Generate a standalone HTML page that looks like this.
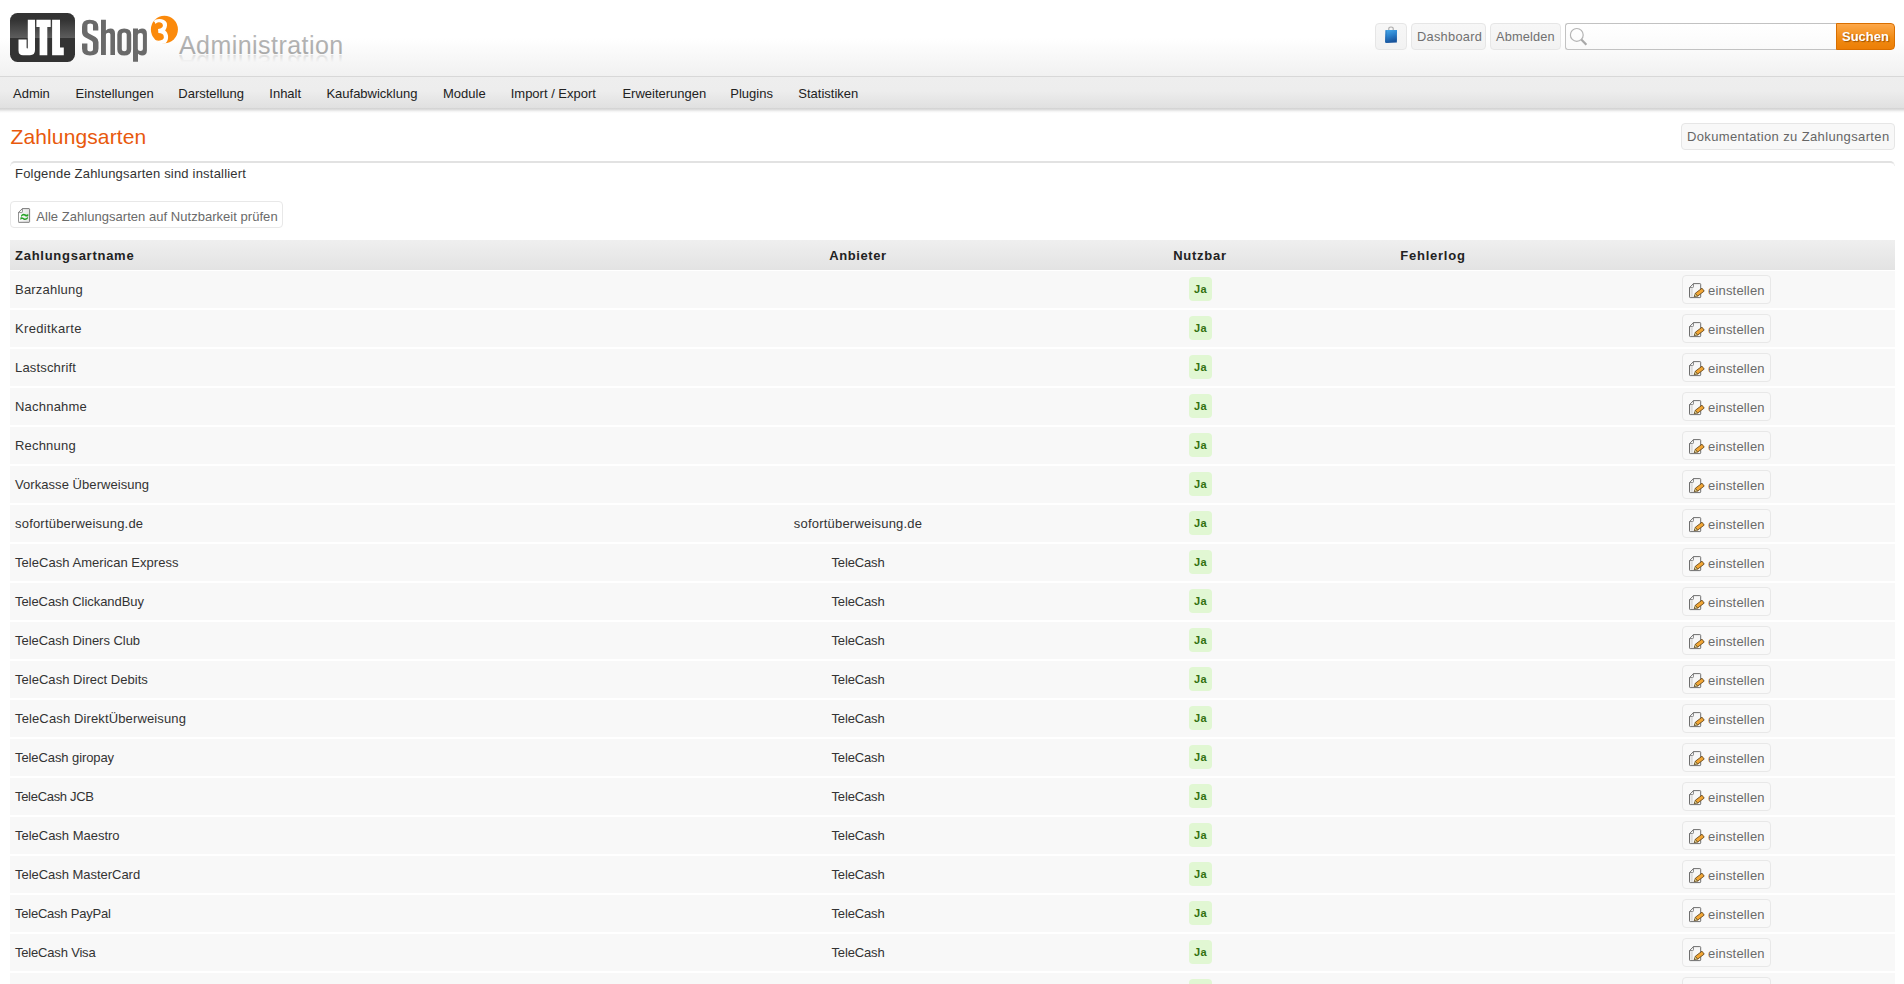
<!DOCTYPE html><html><head><meta charset="utf-8"><title>Zahlungsarten</title><style>
*{box-sizing:border-box}
html,body{margin:0;padding:0;background:#fff;width:1904px;height:984px;overflow:hidden;position:relative;font-family:"Liberation Sans",sans-serif;}
.a{position:absolute}
.t{white-space:nowrap;line-height:15px}
.dv,.dvp,.dve{font-size:13px;color:#333}
.dvb{font-size:13px;font-weight:bold;color:#222}
#hdr{left:0;top:0;width:1904px;height:76px;background:linear-gradient(#ffffff 0%,#ffffff 50%,#f9f9f9 70%,#f1f1f1 100%)}
#hline{left:0;top:76px;width:1904px;height:1px;background:#d8d8d8}
#nav{left:0;top:77px;width:1904px;height:31px;background:linear-gradient(#eeeeee 0%,#ededed 45%,#e0e0e0 100%)}
#navsh{left:0;top:108px;width:1904px;height:5px;background:linear-gradient(#d3d3d3 0%,#d6d6d6 20%,#e6e6e6 45%,#f5f5f5 70%,#ffffff 100%)}
.nv{font-size:13px;color:#222;top:86px}
.hb{top:23px;height:27px;border:1px solid #e6e6e6;border-radius:4px;background:linear-gradient(#f7f7f7,#f2f2f2);}
.hbt{font-size:12.8px !important;color:#707070;top:29px}
#srch{left:1565px;top:23px;width:272px;height:27px;border:1px solid #c2c2c2;border-right:none;border-radius:3px 0 0 3px;background:linear-gradient(#ffffff,#fafafa)}
#sbtn{left:1836px;top:23px;width:59px;height:27px;border:1px solid #d96f00;border-radius:0 4px 4px 0;background:linear-gradient(#fda84a,#f08a12 60%,#ec7e06)}
#sbt{left:1842px;top:29px;font-size:13px;font-weight:bold;color:#fff;text-shadow:1px 1px 1px #9a5000}
#title{left:10.5px;top:124px;font-size:21px;color:#e8590c;line-height:26px;letter-spacing:0.12px}
#doc{left:1681px;top:123px;width:214px;height:27px;border:1px solid #e6e6e6;border-radius:4px;background:#f8f8f8}
#boxline{left:10px;top:161px;width:1885px;height:5px;border-top:2px solid #e2e2e2;border-left:1px solid #f0f0f0;border-right:1px solid #f0f0f0;border-radius:6px 6px 0 0}
#alle{left:10px;top:201px;width:273px;height:27px;border:1px solid #e8e8e8;border-radius:4px;background:#fff}
#thead{left:10px;top:240px;width:1885px;height:30px;background:linear-gradient(#efefef,#e3e3e3)}
.row{left:10px;width:1885px;height:37px;background:#f8f8f8}
.ja{width:23px;height:24px;background:#e1f7d3;border-radius:4px;left:1189px}
.jat{font-size:11px;font-weight:bold;color:#327010;letter-spacing:0.3px}
.eb{left:1682px;width:89px;height:29px;border:1px solid #e8e8e8;border-radius:4px;background:#f9f9f9}
.ebt{left:1708px;color:#6a6a6a}
</style></head><body>
<div id="hdr" class="a"></div><div id="hline" class="a"></div><div id="nav" class="a"></div><div id="navsh" class="a"></div>

<svg class="a" style="left:0;top:0" width="360" height="76" viewBox="0 0 360 76">
<defs>
<linearGradient id="jg" x1="0" y1="0" x2="0" y2="1">
<stop offset="0" stop-color="#333"/><stop offset="0.15" stop-color="#343434"/><stop offset="0.5" stop-color="#5c5c5c"/><stop offset="0.505" stop-color="#333"/><stop offset="1" stop-color="#333"/>
</linearGradient>
<linearGradient id="adm" x1="0" y1="0" x2="0" y2="1"><stop offset="0" stop-color="#bdbdbd"/><stop offset="1" stop-color="#a4a4a4"/></linearGradient>
<linearGradient id="refl" gradientUnits="userSpaceOnUse" x1="0" y1="46" x2="0" y2="54"><stop offset="0" stop-color="#f4f4f4"/><stop offset="1" stop-color="#b8b8b8"/></linearGradient>
</defs>
<rect x="10" y="13" width="65" height="49" rx="7.5" fill="url(#jg)"/>
<path fill="#fff" d="M27.8,19.7 H35 V50 Q35,55.2 30,55.2 H23 Q18.5,55.2 18.5,50.5 V39.6 H26.6 V47.5 Q26.6,48.6 27.4,48.6 Q27.8,48.6 27.8,47.5 Z"/>
<path fill="#fff" d="M36.4,19.7 H50.7 V27 H47.3 V55.2 H39.6 V27 H36.4 Z"/>
<path fill="#fff" d="M52.1,19.7 H60 V47.6 H63.8 V55.2 H52.1 Z"/>
<g fill="#6a6a6a">
<path d="M89.5,19.7 Q98.3,19.7 98.3,27 V30.5 H93 V25.5 Q93,23.6 90.2,23.6 Q87.4,23.6 87.4,25.5 V31 Q87.4,32.6 89,33.5 L95.5,37 Q98.5,38.8 98.5,42 V48.5 Q98.5,55.5 90,55.5 Q82,55.5 82,48.5 V43.5 H87.4 V49.5 Q87.4,51.4 90.2,51.4 Q93,51.4 93,49.5 V43 Q93,41.6 91.5,40.8 L85,37.2 Q82,35.4 82,32 V27 Q82,19.7 89.5,19.7 Z"/>
<path d="M101,19.7 H105.9 V30.5 Q107.5,28.5 110.5,28.5 Q115,28.5 115,33.5 V55 H110.4 V34.5 Q110.4,32.8 108.6,32.8 Q105.9,32.8 105.9,35 V55 H101 Z"/>
<path d="M124.2,28.5 Q131.2,28.5 131.2,34.5 V49.5 Q131.2,55.5 124.2,55.5 Q117.3,55.5 117.3,49.5 V34.5 Q117.3,28.5 124.2,28.5 Z M124.2,32.5 Q121.8,32.5 121.8,34.5 V49.3 Q121.8,51.3 124.2,51.3 Q126.7,51.3 126.7,49.3 V34.5 Q126.7,32.5 124.2,32.5 Z"/>
<path d="M133,28.5 H138 V30.3 Q139.5,28.5 142,28.5 Q146.9,28.5 146.9,33.5 V50.5 Q146.9,55.5 142,55.5 Q139.5,55.5 138,53.8 V61.8 H133 Z M140.5,33 Q137.8,33 137.8,35 V49 Q137.8,51 140.5,51 Q142.9,51 142.9,49 V35 Q142.9,33 140.5,33 Z"/>
</g>
<ellipse cx="164.4" cy="29.5" rx="13.5" ry="13.65" fill="#fb8a0c"/>
<path fill="#fff" transform="translate(148,13) scale(0.03455)" d="M205,195 C330,150 500,170 545,290 C565,380 530,460 495,510 C560,560 600,660 575,760 C560,810 540,840 515,870 L480,880 L300,860 L230,790 C300,815 420,800 450,740 C465,700 458,690 455,680 C460,620 400,580 300,578 L290,460 C400,455 440,400 430,350 C420,290 370,265 310,270 C260,275 230,300 215,320 C200,280 190,240 160,250 C170,230 185,210 205,195 Z"/>
<clipPath id="rc"><rect x="170" y="54" width="190" height="8"/></clipPath>
<text x="179" y="53.5" font-family="Liberation Sans" font-size="25" fill="url(#adm)" letter-spacing="0.45">Administration</text>
<g clip-path="url(#rc)" opacity="0.45"><g transform="translate(0,108) scale(1,-1)">
<text x="179" y="53.5" font-family="Liberation Sans" font-size="25" fill="url(#refl)" letter-spacing="0.45">Administration</text>
</g></g>
</svg>
<div class="a t nv" style="left:13px">Admin</div>
<div class="a t nv" style="left:75.6px">Einstellungen</div>
<div class="a t nv" style="left:178.3px">Darstellung</div>
<div class="a t nv" style="left:269.3px">Inhalt</div>
<div class="a t nv" style="left:326.4px">Kaufabwicklung</div>
<div class="a t nv" style="left:443px">Module</div>
<div class="a t nv" style="left:510.7px">Import / Export</div>
<div class="a t nv" style="left:622.4px">Erweiterungen</div>
<div class="a t nv" style="left:730.3px">Plugins</div>
<div class="a t nv" style="left:798.3px">Statistiken</div>
<div class="a hb" style="left:1375px;width:32px"></div>
<svg class="a" style="left:1383px;top:26px" width="16" height="18" viewBox="0 0 16 18">
<defs><linearGradient id="bg" x1="0" y1="0" x2="0.3" y2="1"><stop offset="0" stop-color="#49aaea"/><stop offset="0.5" stop-color="#2c82cc"/><stop offset="1" stop-color="#18549c"/></linearGradient></defs>
<path d="M5.8,5 V2.6 Q5.8,1 8,1 Q10.2,1 10.2,2.6 V5" fill="none" stroke="#a9a9a9" stroke-width="1.1"/>
<path d="M2.6,4 H14 L13.9,16.4 L3.4,16.9 L2.1,16.3 Z" fill="url(#bg)"/>
<path d="M2.6,4 L3.4,4.6 L3.4,16.9 L2.1,16.3 Z" fill="#1d5fa6" opacity="0.7"/>
</svg>
<div class="a hb" style="left:1411px;width:75px"></div><div class="a t dv hbt" style="left:1417px;letter-spacing:0.289px">Dashboard</div>
<div class="a hb" style="left:1490px;width:71px"></div><div class="a t dv hbt" style="left:1496px;letter-spacing:0.150px">Abmelden</div>
<div id="srch" class="a"></div>
<svg class="a" style="left:1566px;top:24px" width="26" height="24" viewBox="0 0 26 24">
<circle cx="10.8" cy="10.9" r="6.4" fill="none" stroke="#b4b4b4" stroke-width="1.2"/>
<path d="M15.3,15.5 L20.4,20.7" stroke="#a8a8a8" stroke-width="2.2"/>
</svg>
<div id="sbtn" class="a"></div><div id="sbt" class="a t">Suchen</div>
<div id="title" class="a t">Zahlungsarten</div>
<div id="doc" class="a"></div><div class="a t dv" style="left:1687px;top:129px;color:#666;letter-spacing:0.367px">Dokumentation zu Zahlungsarten</div>
<div id="boxline" class="a"></div>
<div class="a t dv" style="left:15px;top:166px;letter-spacing:0.200px">Folgende Zahlungsarten sind installiert</div>
<div id="alle" class="a"></div>
<svg class="a" style="left:18px;top:208px" width="13" height="16" viewBox="0 0 13 16">
<defs><linearGradient id="rfg" x1="0" y1="0" x2="1" y2="0"><stop offset="0" stop-color="#fff"/><stop offset="1" stop-color="#e4e4e4"/></linearGradient></defs>
<path d="M4.4,0.6 H11 Q11.6,0.6 11.6,1.2 V13.7 Q11.6,14.3 11,14.3 H0.9 Q0.3,14.3 0.3,13.7 V4.6 Z" fill="url(#rfg)" stroke="#7a7a7a" stroke-width="1"/>
<path d="M0.4,4.6 L4.4,0.7 V3.9 Q4.4,4.6 3.7,4.6 Z" fill="#fff" stroke="#7a7a7a" stroke-width="0.8"/>
<g transform="translate(0,-0.8)"><path d="M2.9,8.6 C3.8,6.4 5.8,6 7.3,7 C8.4,7.7 9.2,7.6 10.2,6.6 L10.4,8.9 C9,9.7 7.9,9.5 6.9,8.7 C5.9,7.9 4.5,8.1 3.4,9.7 Z" fill="#27a327"/>
<path d="M2.4,10.2 C3.7,9.7 4.8,10 5.8,10.8 C7,11.8 8.4,11.5 9.8,9.9 L10.1,10.9 C8.8,13.1 6.8,13.3 5.3,12.3 C4.3,11.6 3.3,11.7 2.4,12.7 Z" fill="#27a327"/></g>
</svg>
<div class="a t" style="left:36.3px;top:209px;font-size:13px;color:#6a6a6a;letter-spacing:0.035px">Alle Zahlungsarten auf Nutzbarkeit prüfen</div>
<div id="thead" class="a"></div>
<div class="a t dvb" style="left:15px;top:248px;letter-spacing:0.735px">Zahlungsartname</div>
<div class="a t dvb" style="left:758px;width:200px;text-align:center;top:248px;letter-spacing:0.607px">Anbieter</div>
<div class="a t dvb" style="left:1100px;width:200px;text-align:center;top:248px;letter-spacing:0.750px">Nutzbar</div>
<div class="a t dvb" style="left:1333px;width:200px;text-align:center;top:248px;letter-spacing:0.750px">Fehlerlog</div>
<div class="a row" style="top:271px"></div>
<div class="a t dv" style="left:15px;top:282px;letter-spacing:0.205px">Barzahlung</div>
<div class="a ja" style="top:277px"></div><div class="a t jat" style="left:1189px;width:23px;text-align:center;top:282px">Ja</div>
<div class="a eb" style="top:275px"></div>
<svg class="a" style="left:1688px;top:283px" width="18" height="17" viewBox="0 0 18 17">
<path d="M5.4,0.6 H11.9 Q12.7,0.6 12.7,1.4 V13.9 Q12.7,14.6 11.9,14.6 H2.2 Q1.5,14.6 1.5,13.9 V4.6 Z" fill="#f7f7f7" stroke="#6e6e6e" stroke-width="1"/>
<path d="M1.6,4.6 L5.4,0.7 V3.8 Q5.4,4.6 4.6,4.6 Z" fill="#fff" stroke="#707070" stroke-width="0.9"/>
<rect x="2.6" y="5.4" width="2.2" height="8.4" fill="#dcdcdc"/>
<path d="M7.3,10.3 L14.0,5.2 L16.2,8.1 L9.5,13.2 Z" fill="#f2a634" stroke="#6b4a1a" stroke-width="0.9" stroke-linejoin="round"/>
<path d="M7.3,10.3 L9.5,13.2 L6.1,13.6 Z" fill="#e9e29a" stroke="#6b4a1a" stroke-width="0.7" stroke-linejoin="round"/>
<path d="M6.1,13.6 L6.8,12.2 L7.5,13.2 Z" fill="#4a3210"/>
</svg>
<div class="a t dve ebt" style="top:283px;letter-spacing:0.184px">einstellen</div>
<div class="a row" style="top:310px"></div>
<div class="a t dv" style="left:15px;top:321px;letter-spacing:0.350px">Kreditkarte</div>
<div class="a ja" style="top:316px"></div><div class="a t jat" style="left:1189px;width:23px;text-align:center;top:321px">Ja</div>
<div class="a eb" style="top:314px"></div>
<svg class="a" style="left:1688px;top:322px" width="18" height="17" viewBox="0 0 18 17">
<path d="M5.4,0.6 H11.9 Q12.7,0.6 12.7,1.4 V13.9 Q12.7,14.6 11.9,14.6 H2.2 Q1.5,14.6 1.5,13.9 V4.6 Z" fill="#f7f7f7" stroke="#6e6e6e" stroke-width="1"/>
<path d="M1.6,4.6 L5.4,0.7 V3.8 Q5.4,4.6 4.6,4.6 Z" fill="#fff" stroke="#707070" stroke-width="0.9"/>
<rect x="2.6" y="5.4" width="2.2" height="8.4" fill="#dcdcdc"/>
<path d="M7.3,10.3 L14.0,5.2 L16.2,8.1 L9.5,13.2 Z" fill="#f2a634" stroke="#6b4a1a" stroke-width="0.9" stroke-linejoin="round"/>
<path d="M7.3,10.3 L9.5,13.2 L6.1,13.6 Z" fill="#e9e29a" stroke="#6b4a1a" stroke-width="0.7" stroke-linejoin="round"/>
<path d="M6.1,13.6 L6.8,12.2 L7.5,13.2 Z" fill="#4a3210"/>
</svg>
<div class="a t dve ebt" style="top:322px;letter-spacing:0.184px">einstellen</div>
<div class="a row" style="top:349px"></div>
<div class="a t dv" style="left:15px;top:360px;letter-spacing:0.170px">Lastschrift</div>
<div class="a ja" style="top:355px"></div><div class="a t jat" style="left:1189px;width:23px;text-align:center;top:360px">Ja</div>
<div class="a eb" style="top:353px"></div>
<svg class="a" style="left:1688px;top:361px" width="18" height="17" viewBox="0 0 18 17">
<path d="M5.4,0.6 H11.9 Q12.7,0.6 12.7,1.4 V13.9 Q12.7,14.6 11.9,14.6 H2.2 Q1.5,14.6 1.5,13.9 V4.6 Z" fill="#f7f7f7" stroke="#6e6e6e" stroke-width="1"/>
<path d="M1.6,4.6 L5.4,0.7 V3.8 Q5.4,4.6 4.6,4.6 Z" fill="#fff" stroke="#707070" stroke-width="0.9"/>
<rect x="2.6" y="5.4" width="2.2" height="8.4" fill="#dcdcdc"/>
<path d="M7.3,10.3 L14.0,5.2 L16.2,8.1 L9.5,13.2 Z" fill="#f2a634" stroke="#6b4a1a" stroke-width="0.9" stroke-linejoin="round"/>
<path d="M7.3,10.3 L9.5,13.2 L6.1,13.6 Z" fill="#e9e29a" stroke="#6b4a1a" stroke-width="0.7" stroke-linejoin="round"/>
<path d="M6.1,13.6 L6.8,12.2 L7.5,13.2 Z" fill="#4a3210"/>
</svg>
<div class="a t dve ebt" style="top:361px;letter-spacing:0.184px">einstellen</div>
<div class="a row" style="top:388px"></div>
<div class="a t dv" style="left:15px;top:399px;letter-spacing:0.214px">Nachnahme</div>
<div class="a ja" style="top:394px"></div><div class="a t jat" style="left:1189px;width:23px;text-align:center;top:399px">Ja</div>
<div class="a eb" style="top:392px"></div>
<svg class="a" style="left:1688px;top:400px" width="18" height="17" viewBox="0 0 18 17">
<path d="M5.4,0.6 H11.9 Q12.7,0.6 12.7,1.4 V13.9 Q12.7,14.6 11.9,14.6 H2.2 Q1.5,14.6 1.5,13.9 V4.6 Z" fill="#f7f7f7" stroke="#6e6e6e" stroke-width="1"/>
<path d="M1.6,4.6 L5.4,0.7 V3.8 Q5.4,4.6 4.6,4.6 Z" fill="#fff" stroke="#707070" stroke-width="0.9"/>
<rect x="2.6" y="5.4" width="2.2" height="8.4" fill="#dcdcdc"/>
<path d="M7.3,10.3 L14.0,5.2 L16.2,8.1 L9.5,13.2 Z" fill="#f2a634" stroke="#6b4a1a" stroke-width="0.9" stroke-linejoin="round"/>
<path d="M7.3,10.3 L9.5,13.2 L6.1,13.6 Z" fill="#e9e29a" stroke="#6b4a1a" stroke-width="0.7" stroke-linejoin="round"/>
<path d="M6.1,13.6 L6.8,12.2 L7.5,13.2 Z" fill="#4a3210"/>
</svg>
<div class="a t dve ebt" style="top:400px;letter-spacing:0.184px">einstellen</div>
<div class="a row" style="top:427px"></div>
<div class="a t dv" style="left:15px;top:438px;letter-spacing:0.193px">Rechnung</div>
<div class="a ja" style="top:433px"></div><div class="a t jat" style="left:1189px;width:23px;text-align:center;top:438px">Ja</div>
<div class="a eb" style="top:431px"></div>
<svg class="a" style="left:1688px;top:439px" width="18" height="17" viewBox="0 0 18 17">
<path d="M5.4,0.6 H11.9 Q12.7,0.6 12.7,1.4 V13.9 Q12.7,14.6 11.9,14.6 H2.2 Q1.5,14.6 1.5,13.9 V4.6 Z" fill="#f7f7f7" stroke="#6e6e6e" stroke-width="1"/>
<path d="M1.6,4.6 L5.4,0.7 V3.8 Q5.4,4.6 4.6,4.6 Z" fill="#fff" stroke="#707070" stroke-width="0.9"/>
<rect x="2.6" y="5.4" width="2.2" height="8.4" fill="#dcdcdc"/>
<path d="M7.3,10.3 L14.0,5.2 L16.2,8.1 L9.5,13.2 Z" fill="#f2a634" stroke="#6b4a1a" stroke-width="0.9" stroke-linejoin="round"/>
<path d="M7.3,10.3 L9.5,13.2 L6.1,13.6 Z" fill="#e9e29a" stroke="#6b4a1a" stroke-width="0.7" stroke-linejoin="round"/>
<path d="M6.1,13.6 L6.8,12.2 L7.5,13.2 Z" fill="#4a3210"/>
</svg>
<div class="a t dve ebt" style="top:439px;letter-spacing:0.184px">einstellen</div>
<div class="a row" style="top:466px"></div>
<div class="a t dv" style="left:15px;top:477px;letter-spacing:0.060px">Vorkasse Überweisung</div>
<div class="a ja" style="top:472px"></div><div class="a t jat" style="left:1189px;width:23px;text-align:center;top:477px">Ja</div>
<div class="a eb" style="top:470px"></div>
<svg class="a" style="left:1688px;top:478px" width="18" height="17" viewBox="0 0 18 17">
<path d="M5.4,0.6 H11.9 Q12.7,0.6 12.7,1.4 V13.9 Q12.7,14.6 11.9,14.6 H2.2 Q1.5,14.6 1.5,13.9 V4.6 Z" fill="#f7f7f7" stroke="#6e6e6e" stroke-width="1"/>
<path d="M1.6,4.6 L5.4,0.7 V3.8 Q5.4,4.6 4.6,4.6 Z" fill="#fff" stroke="#707070" stroke-width="0.9"/>
<rect x="2.6" y="5.4" width="2.2" height="8.4" fill="#dcdcdc"/>
<path d="M7.3,10.3 L14.0,5.2 L16.2,8.1 L9.5,13.2 Z" fill="#f2a634" stroke="#6b4a1a" stroke-width="0.9" stroke-linejoin="round"/>
<path d="M7.3,10.3 L9.5,13.2 L6.1,13.6 Z" fill="#e9e29a" stroke="#6b4a1a" stroke-width="0.7" stroke-linejoin="round"/>
<path d="M6.1,13.6 L6.8,12.2 L7.5,13.2 Z" fill="#4a3210"/>
</svg>
<div class="a t dve ebt" style="top:478px;letter-spacing:0.184px">einstellen</div>
<div class="a row" style="top:505px"></div>
<div class="a t dv" style="left:15px;top:516px;letter-spacing:0.198px">sofortüberweisung.de</div>
<div class="a t dvp" style="left:708px;width:300px;text-align:center;top:516px;letter-spacing:0.202px">sofortüberweisung.de</div>
<div class="a ja" style="top:511px"></div><div class="a t jat" style="left:1189px;width:23px;text-align:center;top:516px">Ja</div>
<div class="a eb" style="top:509px"></div>
<svg class="a" style="left:1688px;top:517px" width="18" height="17" viewBox="0 0 18 17">
<path d="M5.4,0.6 H11.9 Q12.7,0.6 12.7,1.4 V13.9 Q12.7,14.6 11.9,14.6 H2.2 Q1.5,14.6 1.5,13.9 V4.6 Z" fill="#f7f7f7" stroke="#6e6e6e" stroke-width="1"/>
<path d="M1.6,4.6 L5.4,0.7 V3.8 Q5.4,4.6 4.6,4.6 Z" fill="#fff" stroke="#707070" stroke-width="0.9"/>
<rect x="2.6" y="5.4" width="2.2" height="8.4" fill="#dcdcdc"/>
<path d="M7.3,10.3 L14.0,5.2 L16.2,8.1 L9.5,13.2 Z" fill="#f2a634" stroke="#6b4a1a" stroke-width="0.9" stroke-linejoin="round"/>
<path d="M7.3,10.3 L9.5,13.2 L6.1,13.6 Z" fill="#e9e29a" stroke="#6b4a1a" stroke-width="0.7" stroke-linejoin="round"/>
<path d="M6.1,13.6 L6.8,12.2 L7.5,13.2 Z" fill="#4a3210"/>
</svg>
<div class="a t dve ebt" style="top:517px;letter-spacing:0.184px">einstellen</div>
<div class="a row" style="top:544px"></div>
<div class="a t dv" style="left:15px;top:555px;letter-spacing:0.041px">TeleCash American Express</div>
<div class="a t dvp" style="left:708px;width:300px;text-align:center;top:555px;letter-spacing:-0.137px">TeleCash</div>
<div class="a ja" style="top:550px"></div><div class="a t jat" style="left:1189px;width:23px;text-align:center;top:555px">Ja</div>
<div class="a eb" style="top:548px"></div>
<svg class="a" style="left:1688px;top:556px" width="18" height="17" viewBox="0 0 18 17">
<path d="M5.4,0.6 H11.9 Q12.7,0.6 12.7,1.4 V13.9 Q12.7,14.6 11.9,14.6 H2.2 Q1.5,14.6 1.5,13.9 V4.6 Z" fill="#f7f7f7" stroke="#6e6e6e" stroke-width="1"/>
<path d="M1.6,4.6 L5.4,0.7 V3.8 Q5.4,4.6 4.6,4.6 Z" fill="#fff" stroke="#707070" stroke-width="0.9"/>
<rect x="2.6" y="5.4" width="2.2" height="8.4" fill="#dcdcdc"/>
<path d="M7.3,10.3 L14.0,5.2 L16.2,8.1 L9.5,13.2 Z" fill="#f2a634" stroke="#6b4a1a" stroke-width="0.9" stroke-linejoin="round"/>
<path d="M7.3,10.3 L9.5,13.2 L6.1,13.6 Z" fill="#e9e29a" stroke="#6b4a1a" stroke-width="0.7" stroke-linejoin="round"/>
<path d="M6.1,13.6 L6.8,12.2 L7.5,13.2 Z" fill="#4a3210"/>
</svg>
<div class="a t dve ebt" style="top:556px;letter-spacing:0.184px">einstellen</div>
<div class="a row" style="top:583px"></div>
<div class="a t dv" style="left:15px;top:594px;letter-spacing:-0.060px">TeleCash ClickandBuy</div>
<div class="a t dvp" style="left:708px;width:300px;text-align:center;top:594px;letter-spacing:-0.137px">TeleCash</div>
<div class="a ja" style="top:589px"></div><div class="a t jat" style="left:1189px;width:23px;text-align:center;top:594px">Ja</div>
<div class="a eb" style="top:587px"></div>
<svg class="a" style="left:1688px;top:595px" width="18" height="17" viewBox="0 0 18 17">
<path d="M5.4,0.6 H11.9 Q12.7,0.6 12.7,1.4 V13.9 Q12.7,14.6 11.9,14.6 H2.2 Q1.5,14.6 1.5,13.9 V4.6 Z" fill="#f7f7f7" stroke="#6e6e6e" stroke-width="1"/>
<path d="M1.6,4.6 L5.4,0.7 V3.8 Q5.4,4.6 4.6,4.6 Z" fill="#fff" stroke="#707070" stroke-width="0.9"/>
<rect x="2.6" y="5.4" width="2.2" height="8.4" fill="#dcdcdc"/>
<path d="M7.3,10.3 L14.0,5.2 L16.2,8.1 L9.5,13.2 Z" fill="#f2a634" stroke="#6b4a1a" stroke-width="0.9" stroke-linejoin="round"/>
<path d="M7.3,10.3 L9.5,13.2 L6.1,13.6 Z" fill="#e9e29a" stroke="#6b4a1a" stroke-width="0.7" stroke-linejoin="round"/>
<path d="M6.1,13.6 L6.8,12.2 L7.5,13.2 Z" fill="#4a3210"/>
</svg>
<div class="a t dve ebt" style="top:595px;letter-spacing:0.184px">einstellen</div>
<div class="a row" style="top:622px"></div>
<div class="a t dv" style="left:15px;top:633px;letter-spacing:-0.034px">TeleCash Diners Club</div>
<div class="a t dvp" style="left:708px;width:300px;text-align:center;top:633px;letter-spacing:-0.137px">TeleCash</div>
<div class="a ja" style="top:628px"></div><div class="a t jat" style="left:1189px;width:23px;text-align:center;top:633px">Ja</div>
<div class="a eb" style="top:626px"></div>
<svg class="a" style="left:1688px;top:634px" width="18" height="17" viewBox="0 0 18 17">
<path d="M5.4,0.6 H11.9 Q12.7,0.6 12.7,1.4 V13.9 Q12.7,14.6 11.9,14.6 H2.2 Q1.5,14.6 1.5,13.9 V4.6 Z" fill="#f7f7f7" stroke="#6e6e6e" stroke-width="1"/>
<path d="M1.6,4.6 L5.4,0.7 V3.8 Q5.4,4.6 4.6,4.6 Z" fill="#fff" stroke="#707070" stroke-width="0.9"/>
<rect x="2.6" y="5.4" width="2.2" height="8.4" fill="#dcdcdc"/>
<path d="M7.3,10.3 L14.0,5.2 L16.2,8.1 L9.5,13.2 Z" fill="#f2a634" stroke="#6b4a1a" stroke-width="0.9" stroke-linejoin="round"/>
<path d="M7.3,10.3 L9.5,13.2 L6.1,13.6 Z" fill="#e9e29a" stroke="#6b4a1a" stroke-width="0.7" stroke-linejoin="round"/>
<path d="M6.1,13.6 L6.8,12.2 L7.5,13.2 Z" fill="#4a3210"/>
</svg>
<div class="a t dve ebt" style="top:634px;letter-spacing:0.184px">einstellen</div>
<div class="a row" style="top:661px"></div>
<div class="a t dv" style="left:15px;top:672px;letter-spacing:0.027px">TeleCash Direct Debits</div>
<div class="a t dvp" style="left:708px;width:300px;text-align:center;top:672px;letter-spacing:-0.137px">TeleCash</div>
<div class="a ja" style="top:667px"></div><div class="a t jat" style="left:1189px;width:23px;text-align:center;top:672px">Ja</div>
<div class="a eb" style="top:665px"></div>
<svg class="a" style="left:1688px;top:673px" width="18" height="17" viewBox="0 0 18 17">
<path d="M5.4,0.6 H11.9 Q12.7,0.6 12.7,1.4 V13.9 Q12.7,14.6 11.9,14.6 H2.2 Q1.5,14.6 1.5,13.9 V4.6 Z" fill="#f7f7f7" stroke="#6e6e6e" stroke-width="1"/>
<path d="M1.6,4.6 L5.4,0.7 V3.8 Q5.4,4.6 4.6,4.6 Z" fill="#fff" stroke="#707070" stroke-width="0.9"/>
<rect x="2.6" y="5.4" width="2.2" height="8.4" fill="#dcdcdc"/>
<path d="M7.3,10.3 L14.0,5.2 L16.2,8.1 L9.5,13.2 Z" fill="#f2a634" stroke="#6b4a1a" stroke-width="0.9" stroke-linejoin="round"/>
<path d="M7.3,10.3 L9.5,13.2 L6.1,13.6 Z" fill="#e9e29a" stroke="#6b4a1a" stroke-width="0.7" stroke-linejoin="round"/>
<path d="M6.1,13.6 L6.8,12.2 L7.5,13.2 Z" fill="#4a3210"/>
</svg>
<div class="a t dve ebt" style="top:673px;letter-spacing:0.184px">einstellen</div>
<div class="a row" style="top:700px"></div>
<div class="a t dv" style="left:15px;top:711px;letter-spacing:0.130px">TeleCash DirektÜberweisung</div>
<div class="a t dvp" style="left:708px;width:300px;text-align:center;top:711px;letter-spacing:-0.137px">TeleCash</div>
<div class="a ja" style="top:706px"></div><div class="a t jat" style="left:1189px;width:23px;text-align:center;top:711px">Ja</div>
<div class="a eb" style="top:704px"></div>
<svg class="a" style="left:1688px;top:712px" width="18" height="17" viewBox="0 0 18 17">
<path d="M5.4,0.6 H11.9 Q12.7,0.6 12.7,1.4 V13.9 Q12.7,14.6 11.9,14.6 H2.2 Q1.5,14.6 1.5,13.9 V4.6 Z" fill="#f7f7f7" stroke="#6e6e6e" stroke-width="1"/>
<path d="M1.6,4.6 L5.4,0.7 V3.8 Q5.4,4.6 4.6,4.6 Z" fill="#fff" stroke="#707070" stroke-width="0.9"/>
<rect x="2.6" y="5.4" width="2.2" height="8.4" fill="#dcdcdc"/>
<path d="M7.3,10.3 L14.0,5.2 L16.2,8.1 L9.5,13.2 Z" fill="#f2a634" stroke="#6b4a1a" stroke-width="0.9" stroke-linejoin="round"/>
<path d="M7.3,10.3 L9.5,13.2 L6.1,13.6 Z" fill="#e9e29a" stroke="#6b4a1a" stroke-width="0.7" stroke-linejoin="round"/>
<path d="M6.1,13.6 L6.8,12.2 L7.5,13.2 Z" fill="#4a3210"/>
</svg>
<div class="a t dve ebt" style="top:712px;letter-spacing:0.184px">einstellen</div>
<div class="a row" style="top:739px"></div>
<div class="a t dv" style="left:15px;top:750px;letter-spacing:-0.090px">TeleCash giropay</div>
<div class="a t dvp" style="left:708px;width:300px;text-align:center;top:750px;letter-spacing:-0.137px">TeleCash</div>
<div class="a ja" style="top:745px"></div><div class="a t jat" style="left:1189px;width:23px;text-align:center;top:750px">Ja</div>
<div class="a eb" style="top:743px"></div>
<svg class="a" style="left:1688px;top:751px" width="18" height="17" viewBox="0 0 18 17">
<path d="M5.4,0.6 H11.9 Q12.7,0.6 12.7,1.4 V13.9 Q12.7,14.6 11.9,14.6 H2.2 Q1.5,14.6 1.5,13.9 V4.6 Z" fill="#f7f7f7" stroke="#6e6e6e" stroke-width="1"/>
<path d="M1.6,4.6 L5.4,0.7 V3.8 Q5.4,4.6 4.6,4.6 Z" fill="#fff" stroke="#707070" stroke-width="0.9"/>
<rect x="2.6" y="5.4" width="2.2" height="8.4" fill="#dcdcdc"/>
<path d="M7.3,10.3 L14.0,5.2 L16.2,8.1 L9.5,13.2 Z" fill="#f2a634" stroke="#6b4a1a" stroke-width="0.9" stroke-linejoin="round"/>
<path d="M7.3,10.3 L9.5,13.2 L6.1,13.6 Z" fill="#e9e29a" stroke="#6b4a1a" stroke-width="0.7" stroke-linejoin="round"/>
<path d="M6.1,13.6 L6.8,12.2 L7.5,13.2 Z" fill="#4a3210"/>
</svg>
<div class="a t dve ebt" style="top:751px;letter-spacing:0.184px">einstellen</div>
<div class="a row" style="top:778px"></div>
<div class="a t dv" style="left:15px;top:789px;letter-spacing:-0.305px">TeleCash JCB</div>
<div class="a t dvp" style="left:708px;width:300px;text-align:center;top:789px;letter-spacing:-0.137px">TeleCash</div>
<div class="a ja" style="top:784px"></div><div class="a t jat" style="left:1189px;width:23px;text-align:center;top:789px">Ja</div>
<div class="a eb" style="top:782px"></div>
<svg class="a" style="left:1688px;top:790px" width="18" height="17" viewBox="0 0 18 17">
<path d="M5.4,0.6 H11.9 Q12.7,0.6 12.7,1.4 V13.9 Q12.7,14.6 11.9,14.6 H2.2 Q1.5,14.6 1.5,13.9 V4.6 Z" fill="#f7f7f7" stroke="#6e6e6e" stroke-width="1"/>
<path d="M1.6,4.6 L5.4,0.7 V3.8 Q5.4,4.6 4.6,4.6 Z" fill="#fff" stroke="#707070" stroke-width="0.9"/>
<rect x="2.6" y="5.4" width="2.2" height="8.4" fill="#dcdcdc"/>
<path d="M7.3,10.3 L14.0,5.2 L16.2,8.1 L9.5,13.2 Z" fill="#f2a634" stroke="#6b4a1a" stroke-width="0.9" stroke-linejoin="round"/>
<path d="M7.3,10.3 L9.5,13.2 L6.1,13.6 Z" fill="#e9e29a" stroke="#6b4a1a" stroke-width="0.7" stroke-linejoin="round"/>
<path d="M6.1,13.6 L6.8,12.2 L7.5,13.2 Z" fill="#4a3210"/>
</svg>
<div class="a t dve ebt" style="top:790px;letter-spacing:0.184px">einstellen</div>
<div class="a row" style="top:817px"></div>
<div class="a t dv" style="left:15px;top:828px;letter-spacing:-0.017px">TeleCash Maestro</div>
<div class="a t dvp" style="left:708px;width:300px;text-align:center;top:828px;letter-spacing:-0.137px">TeleCash</div>
<div class="a ja" style="top:823px"></div><div class="a t jat" style="left:1189px;width:23px;text-align:center;top:828px">Ja</div>
<div class="a eb" style="top:821px"></div>
<svg class="a" style="left:1688px;top:829px" width="18" height="17" viewBox="0 0 18 17">
<path d="M5.4,0.6 H11.9 Q12.7,0.6 12.7,1.4 V13.9 Q12.7,14.6 11.9,14.6 H2.2 Q1.5,14.6 1.5,13.9 V4.6 Z" fill="#f7f7f7" stroke="#6e6e6e" stroke-width="1"/>
<path d="M1.6,4.6 L5.4,0.7 V3.8 Q5.4,4.6 4.6,4.6 Z" fill="#fff" stroke="#707070" stroke-width="0.9"/>
<rect x="2.6" y="5.4" width="2.2" height="8.4" fill="#dcdcdc"/>
<path d="M7.3,10.3 L14.0,5.2 L16.2,8.1 L9.5,13.2 Z" fill="#f2a634" stroke="#6b4a1a" stroke-width="0.9" stroke-linejoin="round"/>
<path d="M7.3,10.3 L9.5,13.2 L6.1,13.6 Z" fill="#e9e29a" stroke="#6b4a1a" stroke-width="0.7" stroke-linejoin="round"/>
<path d="M6.1,13.6 L6.8,12.2 L7.5,13.2 Z" fill="#4a3210"/>
</svg>
<div class="a t dve ebt" style="top:829px;letter-spacing:0.184px">einstellen</div>
<div class="a row" style="top:856px"></div>
<div class="a t dv" style="left:15px;top:867px;letter-spacing:-0.033px">TeleCash MasterCard</div>
<div class="a t dvp" style="left:708px;width:300px;text-align:center;top:867px;letter-spacing:-0.137px">TeleCash</div>
<div class="a ja" style="top:862px"></div><div class="a t jat" style="left:1189px;width:23px;text-align:center;top:867px">Ja</div>
<div class="a eb" style="top:860px"></div>
<svg class="a" style="left:1688px;top:868px" width="18" height="17" viewBox="0 0 18 17">
<path d="M5.4,0.6 H11.9 Q12.7,0.6 12.7,1.4 V13.9 Q12.7,14.6 11.9,14.6 H2.2 Q1.5,14.6 1.5,13.9 V4.6 Z" fill="#f7f7f7" stroke="#6e6e6e" stroke-width="1"/>
<path d="M1.6,4.6 L5.4,0.7 V3.8 Q5.4,4.6 4.6,4.6 Z" fill="#fff" stroke="#707070" stroke-width="0.9"/>
<rect x="2.6" y="5.4" width="2.2" height="8.4" fill="#dcdcdc"/>
<path d="M7.3,10.3 L14.0,5.2 L16.2,8.1 L9.5,13.2 Z" fill="#f2a634" stroke="#6b4a1a" stroke-width="0.9" stroke-linejoin="round"/>
<path d="M7.3,10.3 L9.5,13.2 L6.1,13.6 Z" fill="#e9e29a" stroke="#6b4a1a" stroke-width="0.7" stroke-linejoin="round"/>
<path d="M6.1,13.6 L6.8,12.2 L7.5,13.2 Z" fill="#4a3210"/>
</svg>
<div class="a t dve ebt" style="top:868px;letter-spacing:0.184px">einstellen</div>
<div class="a row" style="top:895px"></div>
<div class="a t dv" style="left:15px;top:906px;letter-spacing:-0.229px">TeleCash PayPal</div>
<div class="a t dvp" style="left:708px;width:300px;text-align:center;top:906px;letter-spacing:-0.137px">TeleCash</div>
<div class="a ja" style="top:901px"></div><div class="a t jat" style="left:1189px;width:23px;text-align:center;top:906px">Ja</div>
<div class="a eb" style="top:899px"></div>
<svg class="a" style="left:1688px;top:907px" width="18" height="17" viewBox="0 0 18 17">
<path d="M5.4,0.6 H11.9 Q12.7,0.6 12.7,1.4 V13.9 Q12.7,14.6 11.9,14.6 H2.2 Q1.5,14.6 1.5,13.9 V4.6 Z" fill="#f7f7f7" stroke="#6e6e6e" stroke-width="1"/>
<path d="M1.6,4.6 L5.4,0.7 V3.8 Q5.4,4.6 4.6,4.6 Z" fill="#fff" stroke="#707070" stroke-width="0.9"/>
<rect x="2.6" y="5.4" width="2.2" height="8.4" fill="#dcdcdc"/>
<path d="M7.3,10.3 L14.0,5.2 L16.2,8.1 L9.5,13.2 Z" fill="#f2a634" stroke="#6b4a1a" stroke-width="0.9" stroke-linejoin="round"/>
<path d="M7.3,10.3 L9.5,13.2 L6.1,13.6 Z" fill="#e9e29a" stroke="#6b4a1a" stroke-width="0.7" stroke-linejoin="round"/>
<path d="M6.1,13.6 L6.8,12.2 L7.5,13.2 Z" fill="#4a3210"/>
</svg>
<div class="a t dve ebt" style="top:907px;letter-spacing:0.184px">einstellen</div>
<div class="a row" style="top:934px"></div>
<div class="a t dv" style="left:15px;top:945px;letter-spacing:-0.183px">TeleCash Visa</div>
<div class="a t dvp" style="left:708px;width:300px;text-align:center;top:945px;letter-spacing:-0.137px">TeleCash</div>
<div class="a ja" style="top:940px"></div><div class="a t jat" style="left:1189px;width:23px;text-align:center;top:945px">Ja</div>
<div class="a eb" style="top:938px"></div>
<svg class="a" style="left:1688px;top:946px" width="18" height="17" viewBox="0 0 18 17">
<path d="M5.4,0.6 H11.9 Q12.7,0.6 12.7,1.4 V13.9 Q12.7,14.6 11.9,14.6 H2.2 Q1.5,14.6 1.5,13.9 V4.6 Z" fill="#f7f7f7" stroke="#6e6e6e" stroke-width="1"/>
<path d="M1.6,4.6 L5.4,0.7 V3.8 Q5.4,4.6 4.6,4.6 Z" fill="#fff" stroke="#707070" stroke-width="0.9"/>
<rect x="2.6" y="5.4" width="2.2" height="8.4" fill="#dcdcdc"/>
<path d="M7.3,10.3 L14.0,5.2 L16.2,8.1 L9.5,13.2 Z" fill="#f2a634" stroke="#6b4a1a" stroke-width="0.9" stroke-linejoin="round"/>
<path d="M7.3,10.3 L9.5,13.2 L6.1,13.6 Z" fill="#e9e29a" stroke="#6b4a1a" stroke-width="0.7" stroke-linejoin="round"/>
<path d="M6.1,13.6 L6.8,12.2 L7.5,13.2 Z" fill="#4a3210"/>
</svg>
<div class="a t dve ebt" style="top:946px;letter-spacing:0.184px">einstellen</div>
<div class="a row" style="top:973px"></div>
<div class="a ja" style="top:979px"></div><div class="a t jat" style="left:1189px;width:23px;text-align:center;top:984px">Ja</div>
<div class="a eb" style="top:977px"></div>
<svg class="a" style="left:1688px;top:985px" width="18" height="17" viewBox="0 0 18 17">
<path d="M5.4,0.6 H11.9 Q12.7,0.6 12.7,1.4 V13.9 Q12.7,14.6 11.9,14.6 H2.2 Q1.5,14.6 1.5,13.9 V4.6 Z" fill="#f7f7f7" stroke="#6e6e6e" stroke-width="1"/>
<path d="M1.6,4.6 L5.4,0.7 V3.8 Q5.4,4.6 4.6,4.6 Z" fill="#fff" stroke="#707070" stroke-width="0.9"/>
<rect x="2.6" y="5.4" width="2.2" height="8.4" fill="#dcdcdc"/>
<path d="M7.3,10.3 L14.0,5.2 L16.2,8.1 L9.5,13.2 Z" fill="#f2a634" stroke="#6b4a1a" stroke-width="0.9" stroke-linejoin="round"/>
<path d="M7.3,10.3 L9.5,13.2 L6.1,13.6 Z" fill="#e9e29a" stroke="#6b4a1a" stroke-width="0.7" stroke-linejoin="round"/>
<path d="M6.1,13.6 L6.8,12.2 L7.5,13.2 Z" fill="#4a3210"/>
</svg>
<div class="a t dve ebt" style="top:985px;letter-spacing:0.184px">einstellen</div>
</body></html>
